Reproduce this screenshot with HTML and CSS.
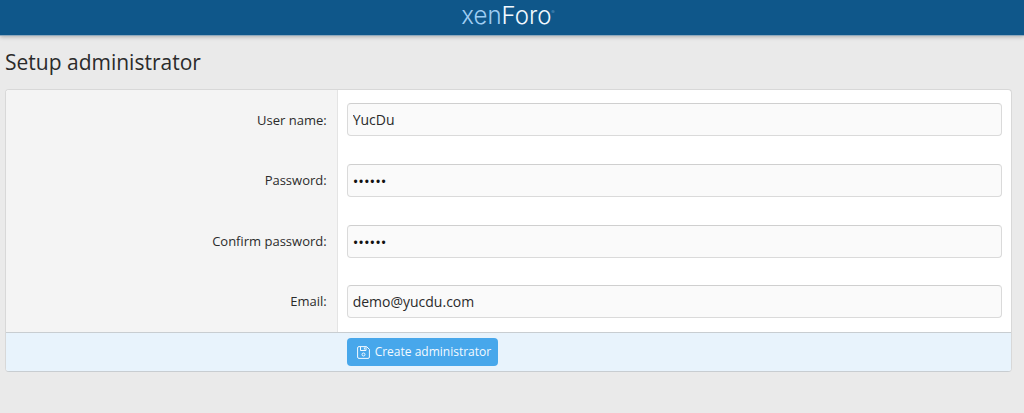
FILE: index.html
```html
<!DOCTYPE html>
<html lang="en">
<head>
    <meta charset="UTF-8">
    <meta name="viewport" content="width=device-width, initial-scale=1.0">
    <title>Setup administrator</title>
    <link rel="stylesheet" href="styles.css">
</head>
<body>
    <header class="header">
        <a class="logo" href="#"><span class="logo-xen">xen</span>Foro<span class="logo-mark">®</span></a>
    </header>

    <main class="content">
        <h1>Setup administrator</h1>

        <form class="block">
            <div class="row">
                <label for="username">User name:</label>
                <div class="field"><input type="text" id="username" value="YucDu"></div>
            </div>
            <div class="row">
                <label for="password">Password:</label>
                <div class="field"><input type="password" id="password" value="123456"></div>
            </div>
            <div class="row">
                <label for="confirm">Confirm password:</label>
                <div class="field"><input type="password" id="confirm" value="123456"></div>
            </div>
            <div class="row">
                <label for="email">Email:</label>
                <div class="field"><input type="email" id="email" value="demo@yucdu.com"></div>
            </div>
            <div class="submit-row">
                <button type="submit">
                    <svg viewBox="0 0 13 13" width="13" height="13" fill="none" stroke="currentColor">
                        <path d="M2 .6h7.6l2.8 2.8V11a1.4 1.4 0 0 1-1.4 1.4H2A1.4 1.4 0 0 1 .6 11V2A1.4 1.4 0 0 1 2 .6z"/>
                        <path d="M3.5 1v3.5h5.5V1M7.4 1.5v2"/>
                        <circle cx="6.5" cy="8.5" r="1.5"/>
                    </svg>
                    Create administrator
                </button>
            </div>
        </form>
    </main>
</body>
</html>
```

FILE: styles.css
```css
* {
    box-sizing: border-box;
}

body {
    margin: 0;
    background: #eaeaea;
    color: #2b2b2b;
    font-family: "Segoe UI", "Open Sans", sans-serif;
    font-size: 14px;
    line-height: 20px;
}

.header {
    height: 36px;
    padding-right: 8px;
    background: #0f578a;
    border-bottom: 1px solid #8fa9bd;
    box-shadow: 0 1px 4px rgba(0, 0, 0, 0.25);
    text-align: center;
}

.logo {
    color: #f2f9ff;
    font-family: Inter, sans-serif;
    font-size: 24px;
    font-weight: 300;
    line-height: 32px;
    text-decoration: none;
}

.logo-xen {
    color: #9fcdf3;
}

.logo-mark {
    color: #6fa5cf;
    font-size: 5px;
    line-height: 1;
    vertical-align: 10px;
}

.content {
    padding: 12px 12px 40px 5px;
}

h1 {
    margin: 0 0 13px;
    font-size: 21px;
    font-weight: 400;
    line-height: 28px;
}

.block {
    background: #fff;
    border: 1px solid #d8d8d8;
    border-bottom-color: #c8cdd1;
    border-radius: 4px;
    overflow: hidden;
}

.row {
    display: flex;
}

.row label {
    width: 33%;
    padding: 20px 10px;
    background: #f4f4f4;
    border-right: 1px solid #e4e4e4;
    font-size: 13px;
    text-align: right;
}

.field {
    flex: 1;
    padding: 14px 9px 13px;
}

.row:first-child .field {
    padding: 13px 9px 14px;
}

.row:nth-child(2n) .field {
    padding-bottom: 14px;
}

input {
    display: block;
    width: 100%;
    height: 33px;
    padding: 5px;
    background: #fafafa;
    border: 1px solid #dadada;
    border-top-color: #cfcfcf;
    border-radius: 4px;
    color: #2b2b2b;
    font: inherit;
}

input[type="password"] {
    color: #111;
    font-size: 15px;
}

.submit-row {
    padding: 5px 9px 5px calc(33% + 9px);
    background: #e8f3fc;
    border-top: 1px solid #c8cdd1;
}

button {
    display: flex;
    align-items: center;
    gap: 5px;
    height: 28px;
    padding: 0 7px 0 10px;
    background: #47a7eb;
    border: 0;
    border-radius: 4px;
    color: #f4faff;
    font: inherit;
    font-size: 12px;
    cursor: pointer;
}
```
